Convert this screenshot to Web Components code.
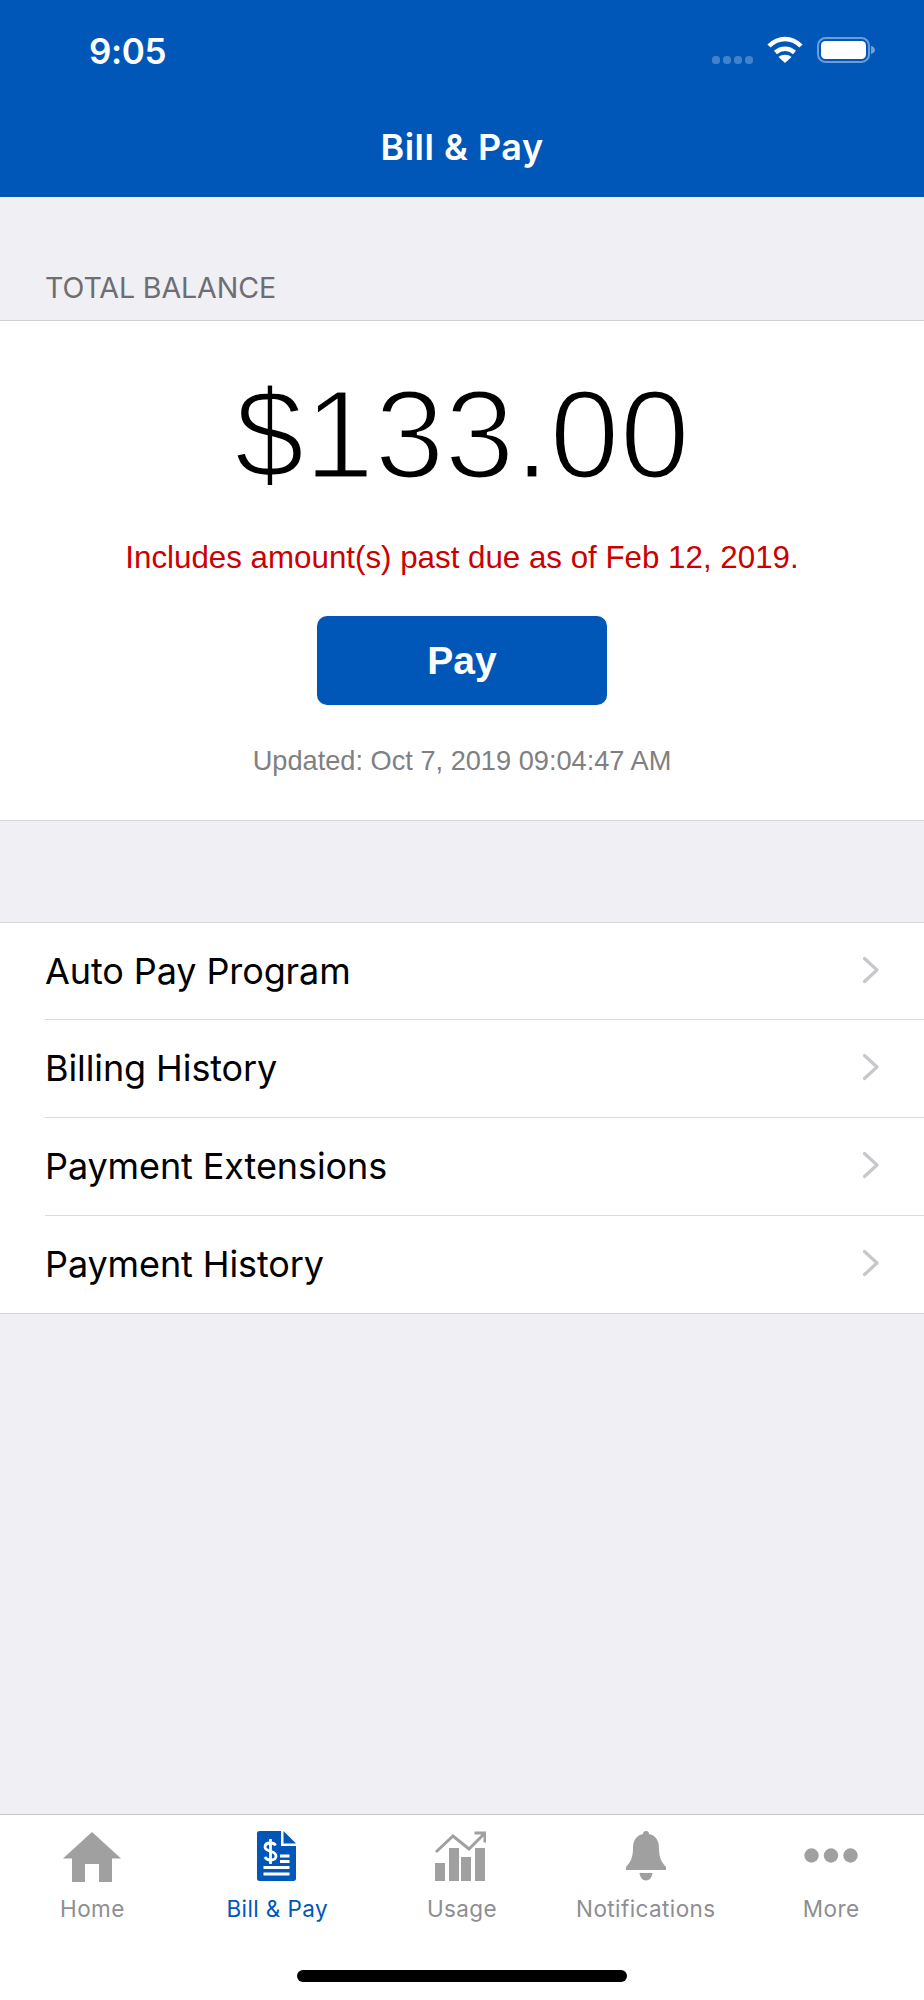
<!DOCTYPE html>
<html><head><meta charset="utf-8">
<style>
html,body{margin:0;padding:0;background:#efeff4}
body{width:924px;height:2000px;overflow:hidden;font-family:"Liberation Sans",Arial,sans-serif}
bill-screen{height:2000px}
</style></head>
<body>
<bill-screen>
  <app-header slot="header" time="9:05" title="Bill &amp; Pay"></app-header>
  <section-label slot="main">TOTAL BALANCE</section-label>
  <balance-card slot="main" amount="$133.00" warning="Includes amount(s) past due as of Feb 12, 2019." updated="Updated: Oct 7, 2019 09:04:47 AM" action="Pay"></balance-card>
  <menu-list slot="main">
    <menu-row first>Auto Pay Program</menu-row>
    <menu-row>Billing History</menu-row>
    <menu-row>Payment Extensions</menu-row>
    <menu-row last>Payment History</menu-row>
  </menu-list>
  <tab-bar slot="footer"></tab-bar>
</bill-screen>
<script>
function def(name, html){
  customElements.define(name, class extends HTMLElement{
    connectedCallback(){
      if(this.shadowRoot) return;
      const r=this.attachShadow({mode:'open'});
      r.innerHTML=typeof html==='function'?html(this):html;
    }
  });
}
const UI='Inter,"Noto Sans",sans-serif';
def('bill-screen',`<style>
:host{display:flex;flex-direction:column;width:924px;background:#efeff4}
.main{flex:1;display:flex;flex-direction:column;min-height:0}
</style><slot name="header"></slot><div class="main"><slot name="main"></slot></div><slot name="footer"></slot>`);

def('app-header',h=>`<style>
:host{display:block;height:197px;background:#0157b8;color:#fff;font-family:${UI}}
.status{height:100px;display:flex;align-items:flex-start;justify-content:space-between;padding:0 42px 0 89px}
.time{font-size:35px;font-weight:600;letter-spacing:-.4px;line-height:40px;margin-top:31px}
.icons{display:flex;align-items:flex-start;margin-top:35px}
.title{font-size:36px;font-weight:600;text-align:center;line-height:44px;letter-spacing:.5px;margin-top:25px}
svg{display:block}
</style>
<div class="status"><span class="time">${h.getAttribute('time')}</span>
<span class="icons"><svg width="170" height="30" viewBox="0 0 170 30">
<g fill="#fff" fill-opacity=".26"><rect x="0" y="21" width="8" height="8" rx="3.500"/><rect x="11" y="21" width="8" height="8" rx="3.500"/><rect x="22" y="21" width="8" height="8" rx="3.500"/><rect x="33" y="21" width="8" height="8" rx="3.500"/></g>
<g fill="none" stroke="#fff" stroke-width="4.500"><path d="M57 11C66.500 1.500 79.500 1.500 89 11"/><path d="M63.500 17.500C69 12.500 77 12.500 82.500 17.500"/></g>
<path d="M73 28L66.500 22C70 19 76 19 79.500 22Z" fill="#fff"/>
<rect x="106" y="3" width="51" height="24" rx="7.500" fill="none" stroke="#fff" stroke-opacity=".42" stroke-width="2"/>
<rect x="109" y="6" width="45" height="18" rx="4.500" fill="#fff"/>
<path d="M159 11v8c2.500-.6 4-2.200 4-4s-1.500-3.400-4-4z" fill="#fff" fill-opacity=".45"/>
</svg></span></div>
<div class="title">${h.getAttribute('title')}</div>`);

def('section-label',`<style>
:host{display:block;height:124px;box-sizing:border-box;padding:76px 45px 0;line-height:30px;color:#6d6d72;border-bottom:1px solid #cfcfd3;font-family:${UI};font-size:28.6px;font-weight:400;letter-spacing:-.12px}
</style><slot></slot>`);

def('balance-card',h=>`<style>
:host{display:flex;flex-direction:column;align-items:center;height:500px;box-sizing:border-box;background:#fff;border-bottom:1px solid #d6d6da;font-family:"Liberation Sans",Arial,sans-serif}
.amt{font:400 126px/140px "Liberation Sans",Arial,sans-serif;color:#000;margin-top:44px;-webkit-text-stroke:3.200px #fff}
.warn{font-size:31.3px;line-height:36px;color:#cc0000;margin-top:35px}
.btn{width:290px;height:89px;margin-top:40px;background:#0157b8;border-radius:10px;color:#fff;font-weight:700;font-size:39px;display:flex;align-items:center;justify-content:center}
.upd{font-size:27.2px;line-height:32px;color:#808080;margin-top:40px}
</style>
<div class="amt">${h.getAttribute('amount')}</div>
<div class="warn">${h.getAttribute('warning')}</div>
<div class="btn">${h.getAttribute('action')}</div>
<div class="upd">${h.getAttribute('updated')}</div>`);

def('menu-list',`<style>
:host{display:block;margin-top:101px;background:#fff;border-top:1px solid #d6d6da;border-bottom:1px solid #d6d6da}
</style><slot></slot>`);

def('menu-row',h=>`<style>
:host{display:block;padding-left:45px;color:#000;font-family:${UI};font-size:36px}
.in{height:${h.hasAttribute('first')?96:97}px;display:flex;align-items:center;justify-content:space-between;padding-right:44px;${h.hasAttribute('last')?'':'border-bottom:1px solid #dcdce0;'}}
.t{letter-spacing:-.1px;margin-top:-1px}
svg{display:block;margin-top:-3px}
</style><div class="in"><span class="t"><slot></slot></span>
<svg width="18" height="28" viewBox="0 0 18 28"><path d="M2.500 2.500L15 14L2.500 25.500" fill="none" stroke="#c7c7cc" stroke-width="3.200" stroke-linecap="round" stroke-linejoin="round"/></svg></div>`);

def('tab-item',h=>`<style>
:host{display:flex;flex-direction:column;align-items:center;box-sizing:border-box;min-width:0;color:${h.hasAttribute('active')?'#0157b8':'#8e8e93'};font-family:${UI};font-size:22.5px;line-height:26px;letter-spacing:.4px;padding-right:${h.getAttribute('inset')||0}px}
.ic{height:54px;display:flex;align-items:flex-start;margin-top:16px}
.lb{margin-top:11px;white-space:nowrap}
svg{display:block}
</style><div class="ic"><slot></slot></div><div class="lb">${h.getAttribute('label')}</div>`);

def('tab-bar',`<style>
:host{display:block;height:186px;box-sizing:border-box;background:#fff;border-top:1px solid #c4c4c8;position:relative}
.row{display:grid;grid-template-columns:repeat(5,1fr);width:924px}
.home{position:absolute;left:297px;bottom:18px;width:330px;height:12px;border-radius:6px;background:#000}
svg{display:block}
.usage{margin-left:-4px}
</style>
<div class="row">
<tab-item label="Home"><svg width="58" height="52" viewBox="0 0 58 52"><path d="M29 1L58 27.500H49V51H36V33H22V51H9V27.500H0Z" fill="#a0a0a0"/></svg></tab-item>
<tab-item label="Bill &amp; Pay" active><svg width="40" height="52" viewBox="0 0 40 52"><path d="M2.500 0H24V15H39V47.500C39 49 38 50 36.500 50H2.500C1 50 0 49 0 47.500V2.500C0 1 1 0 2.500 0ZM26.500 0L39 12.500H26.500Z" fill="#0157b8"/>
<g fill="none" stroke="#fff" stroke-width="2.800"><path d="M18.500 14.500C17.700 12.700 15.800 12 13.500 12C10.500 12 8 13.300 8 16C8 21.500 19 19 19 25C19 27.700 16.500 29 13.500 29C11 29 9 28 7.800 26"/><path d="M13.500 8V33"/><path d="M23 25H32.500M23 30.500H32.500M6.500 36.500H32.500M6.500 43H32.500" stroke-width="3"/></g></svg></tab-item>
<tab-item label="Usage"><svg class="usage" width="52" height="52" viewBox="0 0 52 52"><g fill="#a0a0a0"><rect x="1" y="32" width="10" height="18"/><rect x="15" y="17" width="10" height="33"/><rect x="27" y="26" width="10" height="24"/><rect x="41" y="17" width="10" height="33"/></g><path d="M2 21L19 5L35 18L50.500 2.500M40.500 2H51V11.500" fill="none" stroke="#a0a0a0" stroke-width="3"/></svg></tab-item>
<tab-item label="Notifications" inset="2"><svg width="42" height="52" viewBox="0 0 42 52"><path d="M21 0C22.800 0 24 1.200 24 3C31 4.500 34 10 34 17C34 27 36.500 31 41 36V39H1V36C5.500 31 8 27 8 17C8 10 11 4.500 18 3C18 1.200 19.200 0 21 0Z" fill="#a0a0a0"/><path d="M14.500 42H27.500C27 46.500 24.500 49.500 21 49.500C17.500 49.500 15 46.500 14.500 42Z" fill="#a0a0a0"/></svg></tab-item>
<tab-item label="More" inset="1"><svg width="54" height="52" viewBox="0 0 54 52"><g fill="#a0a0a0"><circle cx="7.500" cy="24.500" r="7.200"/><circle cx="27" cy="24.500" r="7.200"/><circle cx="46.500" cy="24.500" r="7.200"/></g></svg></tab-item>
</div>
<div class="home"></div>`);
</script>
</body></html>
